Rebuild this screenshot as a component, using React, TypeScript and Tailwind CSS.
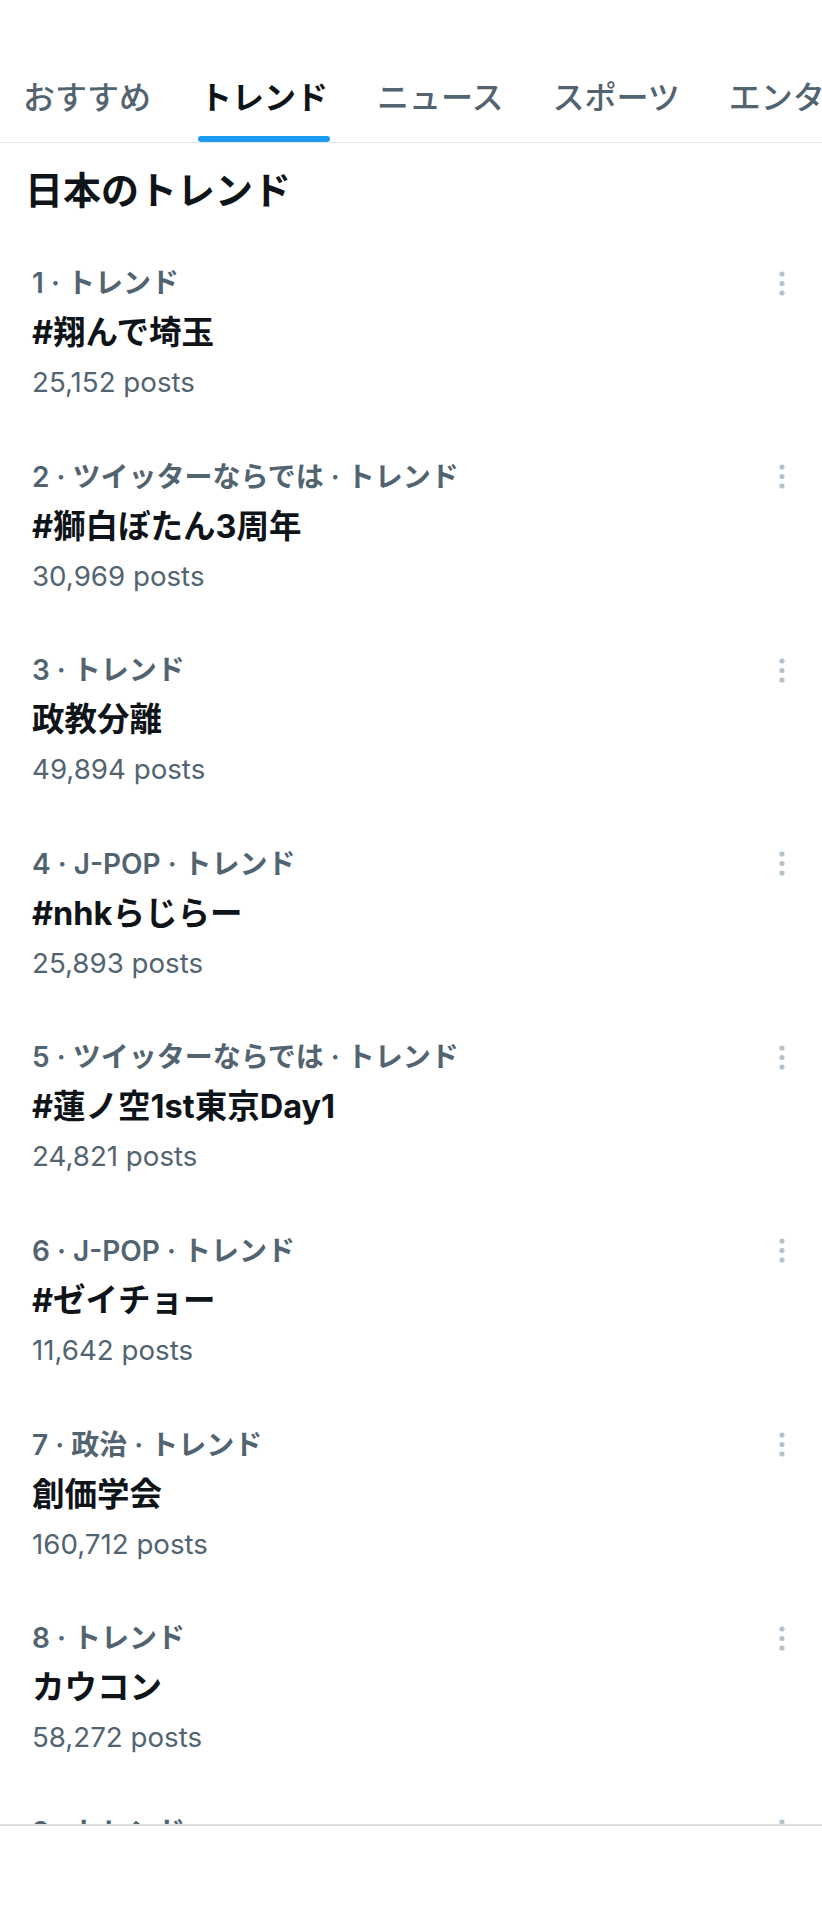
const font = "font-['Inter','Noto_Sans_CJK_JP',sans-serif]";

const tabs = ["おすすめ", "トレンド", "ニュース", "スポーツ", "エンタメ"];

const trends = [
  { meta: "1 · トレンド", title: "#翔んで埼玉", posts: "25,152 posts" },
  { meta: "2 · ツイッターならでは · トレンド", title: "#獅白ぼたん3周年", posts: "30,969 posts" },
  { meta: "3 · トレンド", title: "政教分離", posts: "49,894 posts" },
  { meta: "4 · J-POP · トレンド", title: "#nhkらじらー", posts: "25,893 posts" },
  { meta: "5 · ツイッターならでは · トレンド", title: "#蓮ノ空1st東京Day1", posts: "24,821 posts" },
  { meta: "6 · J-POP · トレンド", title: "#ゼイチョー", posts: "11,642 posts" },
  { meta: "7 · 政治 · トレンド", title: "創価学会", posts: "160,712 posts" },
  { meta: "8 · トレンド", title: "カウコン", posts: "58,272 posts" },
  { meta: "9 · トレンド", title: "紅白", posts: "102,331 posts" },
];

function MoreDots() {
  return (
    <svg width="6" height="25" viewBox="0 0 6 25" aria-hidden="true">
      <circle cx="3" cy="3" r="2.6" fill="#b4c2cc" />
      <circle cx="3" cy="12.5" r="2.6" fill="#b4c2cc" />
      <circle cx="3" cy="22" r="2.6" fill="#b4c2cc" />
    </svg>
  );
}

function TrendRow({ meta, title, posts }: { meta: string; title: string; posts: string }) {
  return (
    <li className="pl-[32px] pr-[37px] pb-[45.6px]">
      <div className="flex items-center justify-between">
        <span className="text-[28px] leading-[50px] font-semibold text-[#536471] whitespace-nowrap">{meta}</span>
        <MoreDots />
      </div>
      <div className="text-[32.5px] leading-[50px] font-bold text-[#0f1419] whitespace-nowrap">{title}</div>
      <div className="text-[27.7px] leading-[48px] text-[#536471]">{posts}</div>
    </li>
  );
}

export default function App() {
  return (
    <div className={`${font} h-[1920px] w-[822px] bg-white flex flex-col overflow-hidden`}>
      <main className="h-[1824px] overflow-hidden">
        <nav className="pt-[82px] border-b border-[#e1e8ed] overflow-hidden">
          <div className="flex gap-[49px] pl-[23px] whitespace-nowrap">
            {tabs.map((t, i) => (
              <div key={t} className="flex flex-col shrink-0">
                <span
                  className={
                    i === 1
                      ? "text-[32px] leading-[31px] font-bold text-[#0f1419]"
                      : "text-[32px] leading-[31px] font-medium text-[#536471]"
                  }
                >
                  {t}
                </span>
                <span
                  className={
                    i === 1
                      ? "mt-[23px] h-[6px] -mx-[2px] rounded-full bg-[#1d9bf0]"
                      : "mt-[23px] h-[6px]"
                  }
                />
              </div>
            ))}
          </div>
        </nav>

        <h2 className="pt-[25px] pb-[46px] pl-[25px] text-[38px] leading-[44px] font-bold text-[#0f1419]">
          日本のトレンド
        </h2>

        <ul>
          {trends.map((t) => (
            <TrendRow key={t.meta} {...t} />
          ))}
        </ul>
      </main>
      <footer className="flex-1 border-t-2 border-[#dedede] bg-white" />
    </div>
  );
}
